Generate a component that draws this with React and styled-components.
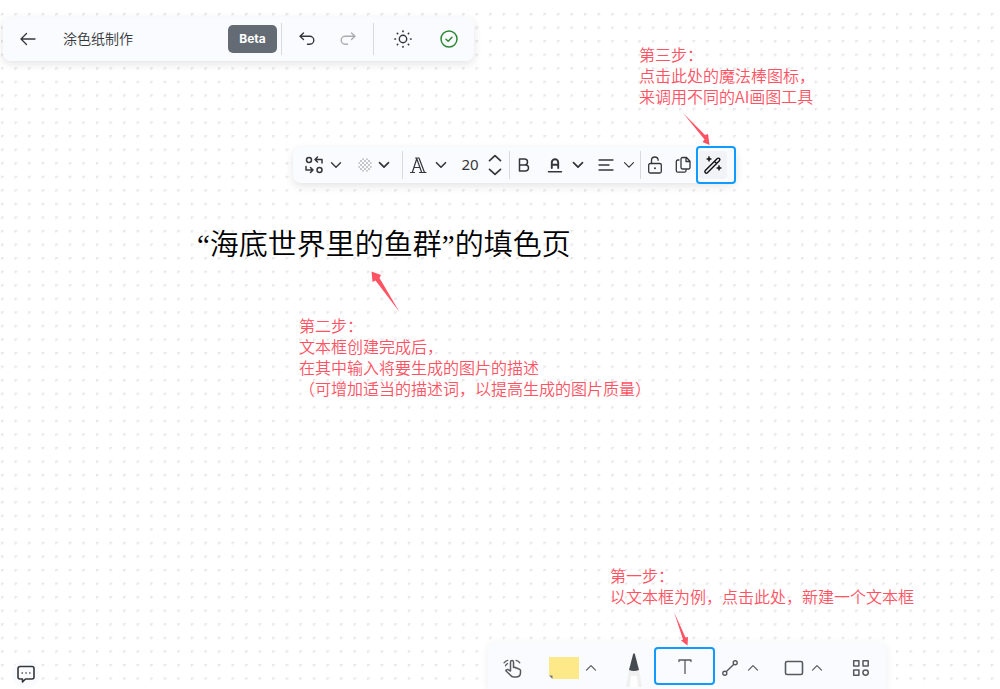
import React from "react";
import styled, { createGlobalStyle } from "styled-components";

const Global = createGlobalStyle`
  *, *::before, *::after { box-sizing: border-box; }
  body { margin: 0; background: #fff; font-family: Inter, "Noto Sans CJK SC", sans-serif; }
  button { font: inherit; color: inherit; border: 0; background: none; padding: 0; cursor: pointer; }
`;

const Stage = styled.main`
  position: relative;
  min-height: 100vh;
  overflow: hidden;
  color: #33373c;
`;

const Grid = styled.svg`
  position: absolute;
  inset: 0;
  width: 100%;
  height: 100%;
`;

const Bar = styled.div`
  position: absolute;
  display: flex;
  align-items: center;
  background: #fafbfe;
  border-radius: 8px;
  box-shadow: 0 3px 8px rgba(30, 35, 50, 0.12);
`;

const Header = styled(Bar)`
  left: 3px;
  top: 17px;
  height: 44px;
  padding-right: 8px;
`;

const FormatBar = styled(Bar)`
  left: 293px;
  top: 147px;
  height: 36px;
  padding-left: 8px;
`;

const Dock = styled(Bar)`
  left: 488px;
  bottom: 0;
  height: 47px;
  padding: 4px 5px 0 0;
  border-radius: 8px 8px 0 0;
  box-shadow: 0 2px 8px rgba(30, 35, 50, 0.08);
  color: #555a61;
`;

const Tool = styled.button`
  display: flex;
  flex: none;
  align-items: center;
  justify-content: center;
  gap: ${(p) => p.$gap || 0}px;
  width: ${(p) => p.$w}px;
  height: 34px;
  color: ${(p) => p.$color || "inherit"};
`;

const PenTool = styled(Tool)`
  padding-left: 6px;
`;

const Highlighted = styled(Tool)`
  height: 38px;
  border: 2px solid #0f9bff;
  border-radius: 4px;
  background: #fafbfe;
`;

const DockHighlighted = styled(Highlighted)`
  margin-bottom: 4px;
`;

const Active = styled.span`
  display: flex;
  align-items: center;
  justify-content: center;
  width: 28px;
  height: 28px;
  margin-right: 6px;
  border-radius: 4px;
  background: #f1f3f7;
`;

const Divider = styled.span`
  flex: none;
  width: 1px;
  height: ${(p) => p.$h}px;
  margin-left: ${(p) => p.$l || 0}px;
  background: #d8dade;
`;

const DocTitle = styled.h1`
  width: 175px;
  margin: 0;
  padding: 0 0 2px 10px;
  font: 350 14px/20px "Noto Sans CJK SC", sans-serif;
`;

const Badge = styled.span`
  width: 49px;
  border-radius: 5px;
  background: #646b75;
  color: #fff;
  font: 700 12px/28px Inter, sans-serif;
  text-align: center;
`;

const FontSize = styled.input`
  width: 24px;
  margin-left: 6px;
  padding: 0 0 2px;
  border: 0;
  background: none;
  color: inherit;
  font: 400 15px/20px "Noto Sans", sans-serif;
  text-align: center;
`;

const Stepper = styled.div`
  display: flex;
  flex-direction: column;
  gap: 2px;
  margin-left: 5px;
`;

const Step = styled.button`
  display: flex;
  align-items: center;
  justify-content: center;
  width: 16px;
  height: 12px;
`;

const CanvasText = styled.p`
  position: absolute;
  left: 197px;
  top: 227px;
  margin: 0;
  color: #000;
  font: 350 29px/36px "Liberation Serif", "Noto Sans CJK SC", sans-serif;
  white-space: nowrap;
`;

const Note = styled.p`
  position: absolute;
  left: ${(p) => p.$x}px;
  top: ${(p) => p.$y}px;
  margin: 0;
  color: #ff5263;
  font: 350 16px/21px "Noto Sans CJK SC", sans-serif;
  white-space: pre;
`;

const Arrow = styled.svg`
  position: absolute;
  left: ${(p) => p.$x}px;
  top: ${(p) => p.$y}px;
  fill: #ff5263;
`;

const Feedback = styled.button`
  position: absolute;
  left: 12px;
  bottom: 1px;
  display: flex;
  align-items: center;
  justify-content: center;
  width: 28px;
  height: 28px;
  border-radius: 50%;
  background: #fafbfe;
`;

function Icon({ w = 18, h = w, sw = 1.3, children }) {
  return (
    <svg width={w} height={h} viewBox={`0 0 ${w} ${h}`} fill="none" stroke="currentColor"
      strokeWidth={sw} strokeLinecap="round" strokeLinejoin="round" aria-hidden="true">
      {children}
    </svg>
  );
}

const Down = ({ sw = 1.4 }) => <Icon w={12} h={8} sw={sw}><path d="M1.5 1.7 6 6.2l4.5-4.5" /></Icon>;
const Up = ({ sw = 1.2 }) => <Icon w={12} h={8} sw={sw}><path d="M1.5 6.2 6 1.7l4.5 4.5" /></Icon>;

const checks = [];
for (let r = 0; r < 7; r++) for (let c = 0; c < 7; c++) if ((r + c) % 2 === 0) checks.push([c * 2, r * 2]);

export default function App() {
  return (
    <>
      <Global />
      <Stage lang="zh-CN">
        <Grid aria-hidden="true">
          <defs>
            <pattern id="dots" width="20" height="20" patternUnits="userSpaceOnUse" patternTransform="translate(1 13) scale(0.678)">
              <path d="M0 0h4v2H2v2H0z" fill="#e6e6e8" />
            </pattern>
          </defs>
          <rect y="8" width="100%" height="100%" fill="url(#dots)" />
        </Grid>

        <Header role="toolbar" aria-label="文档">
          <Tool $w={50} aria-label="返回"><Icon><path d="M16 9H2.500M7.500 3.500 2 9l5.500 5.500" /></Icon></Tool>
          <DocTitle>涂色纸制作</DocTitle>
          <Badge>Beta</Badge>
          <Divider $h={32} $l={4} />
          <Tool $w={50} aria-label="撤销"><Icon sw={1.4}><path d="M5.500 3 2 6.300l3.500 3.200M2.200 6.300h9.600a4 4 0 0 1 0 8H9.500" /></Icon></Tool>
          <Tool $w={32} $color="#a9acb1" aria-label="重做"><Icon sw={1.4}><path d="M12.500 3 16 6.300l-3.500 3.200M15.800 6.300H6.200a4 4 0 0 0 0 8h2.300" /></Icon></Tool>
          <Divider $h={32} $l={9} />
          <Tool $w={58} aria-label="主题">
            <Icon sw={1.4}>
              <circle cx="9" cy="9" r="3.700" />
              <path strokeWidth="1.700" d="M9 1v.4M9 16.600v.4M1 9h.4M16.600 9h.4M3.400 3.400l.2.2M14.400 14.400l.2.2M3.400 14.600l.2-.2M14.400 3.600l.2-.2" />
            </Icon>
          </Tool>
          <Tool $w={34} $color="#2c8a35" aria-label="已保存"><Icon sw={1.5}><circle cx="9" cy="9" r="8" /><path d="m6 9.200 2.200 2L12 7.300" /></Icon></Tool>
        </Header>

        <FormatBar role="toolbar" aria-label="格式">
          <Tool $w={44} $gap={6} aria-label="切换类型">
            <Icon w={20} sw={1.5}>
              <circle cx="5" cy="5" r="2.500" /><circle cx="15.500" cy="15" r="2.500" />
              <path d="M13.500 2 11 4.500 13.500 7M11.500 4.500H18V8M2 11.500V15h6.500M6.500 12.500 9 15l-2.500 2.500" />
            </Icon>
            <Down />
          </Tool>
          <Tool $w={57} $gap={6} aria-label="填充颜色">
            <svg width="14" height="14" viewBox="0 0 14 14" aria-hidden="true">
              <clipPath id="disc"><circle cx="7" cy="7" r="7" /></clipPath>
              <g clipPath="url(#disc)" fill="#c6c8cb">{checks.map(([x, y]) => <rect key={`${x}-${y}`} x={x} y={y} width="2" height="2" />)}</g>
            </svg>
            <Down sw={1.7} />
          </Tool>
          <Divider $h={28} />
          <Tool $w={49} $gap={8} aria-label="字体">
            <Icon w={18} sw={1.2}>
              <path d="M1.500 16.500h4M10.500 16.500h6.500M3.300 16.500 8 2M6.500 2h3.500l5.500 14.500M7.700 2.500l5 14M5.200 11.500h5.500" />
            </Icon>
            <Down sw={1.6} />
          </Tool>
          <FontSize aria-label="字号" defaultValue="20" />
          <Stepper>
            <Step aria-label="增大字号"><Icon w={14} h={8} sw={1.7}><path d="m1.500 6.700 5.500-5 5.500 5" /></Icon></Step>
            <Step aria-label="减小字号"><Icon w={14} h={8} sw={1.7}><path d="m1.500 1.300 5.500 5 5.500-5" /></Icon></Step>
          </Stepper>
          <Divider $h={28} $l={6} />
          <Tool $w={28} aria-label="加粗"><Icon w={14} h={16} sw={1.500}><path d="M2.500 2h5a3 3 0 0 1 0 6h-5zM2.500 8h6a3 3 0 0 1 0 6h-6z" /></Icon></Tool>
          <Tool $w={54} $gap={9} aria-label="文字颜色">
            <Icon w={16} h={18}><path strokeWidth="1.900" d="M4.800 12V6.500a3.200 3.200 0 0 1 6.400 0V12M4.800 8.700h6.400" /><path strokeWidth="1.500" d="M1.500 15.800h13" /></Icon>
            <Down sw={1.7} />
          </Tool>
          <Tool $w={48} $gap={8} aria-label="对齐">
            <Icon w={18} h={16}><path d="M2 3h14M2 8h10M2 13h14" /></Icon>
            <Down sw={1.200} />
          </Tool>
          <Divider $h={28} />
          <Tool $w={28} aria-label="锁定">
            <Icon w={16} h={20}><rect x="1.700" y="8.500" width="12.600" height="9.500" rx="1.500" /><path d="M4.500 8.500V5.300a3.300 3.300 0 0 1 6.600 0" /><circle cx="8" cy="13.200" r="1" fill="currentColor" stroke="none" /></Icon>
          </Tool>
          <Tool $w={27} aria-label="复制">
            <Icon w={16} h={20}><path d="M7.500 2.500h4l3.500 3.700v6.300a1.500 1.500 0 0 1-1.500 1.500h-6A1.500 1.500 0 0 1 6 12.500V4a1.500 1.500 0 0 1 1.500-1.500zM11 2.700v3.800h3.800M4 5H2.800A1.500 1.500 0 0 0 1.300 6.500v9.200a1.500 1.500 0 0 0 1.500 1.500H9.500a1.500 1.500 0 0 0 1.500-1.500v-.5" /></Icon>
          </Tool>
          <Highlighted $w={40} $color="#111" aria-label="魔法棒">
            <Active>
              <Icon w={20} sw={1.400}>
                <path d="m2.300 15.600 12-12a1.400 1.400 0 0 1 2.100 2.100l-12 12a1.400 1.400 0 0 1-2.100-2.100zM11.500 6.400l2.100 2.100" />
                <path fill="currentColor" strokeWidth=".6" d="M6 1.500l.7 1.800 1.800.7-1.800.7L6 6.500l-.7-1.800L3.500 4l1.800-.7zM16 10.500l.7 1.800 1.800.7-1.800.7-.7 1.800-.7-1.800-1.800-.7 1.800-.7z" />
              </Icon>
            </Active>
          </Highlighted>
        </FormatBar>

        <CanvasText>“海底世界里的鱼群”的填色页</CanvasText>

        <Feedback aria-label="反馈">
          <Icon w={20} sw={1.600}><path d="M4 2.500h12a2 2 0 0 1 2 2v8.500a2 2 0 0 1-2 2H9.500L6.500 18v-3H4a2 2 0 0 1-2-2V4.500a2 2 0 0 1 2-2z" /><path d="M6.200 9h.1M10 9h.1M13.800 9h.1" /></Icon>
        </Feedback>

        <Dock role="toolbar" aria-label="工具">
          <Tool $w={49} aria-label="选择">
            <Icon w={20} sw={1.500}>
              <path d="M7.500 13V4a1.500 1.500 0 0 1 3 0v5.500q1.800-.8 2.500.7 1.700-.6 2.400.9 2.100-.2 2.100 1.800v1.600c0 2.800-2 4.500-4.500 4.500h-2c-1.800 0-3-.8-4-2.200L2.800 12.800q.6-1.900 2.600-1z" />
              <path strokeWidth="1.300" d="M1 4.800q1.500-2 3.800-2.500M2.500 7.800q.6-1.500 2-2.200M13 2.300q2.500.5 3.800 2.500" />
            </Icon>
          </Tool>
          <Tool $w={71} $gap={6} aria-label="便签">
            <svg width="30" height="22" viewBox="0 0 30 22" aria-hidden="true"><path fill="#fde988" d="M0 0h30v22H4L0 18z" /><path fill="#77777c" d="M0 18.500h3.500V22z" /></svg>
            <Up />
          </Tool>
          <PenTool $w={46} aria-label="画笔">
            <svg width="18" height="38" viewBox="0 0 18 38" aria-hidden="true"><path fill="#f0f0f1" d="M4 21h10l3 17H1z" /><path fill="#fff" d="M6 27h6l1 11H5z" /><path fill="#454950" d="M8 5.500q1-2.500 2 0L14 21q-5 2-10 0z" /></svg>
          </PenTool>
          <DockHighlighted $w={61} aria-label="文本"><Icon w={14} h={16} sw={1.300}><path d="M1 3.500V2h12v1.500M7 2v13.500" /></Icon></DockHighlighted>
          <Tool $w={50} $gap={8} aria-label="连线">
            <Icon w={18} sw={1.400}><circle cx="3.800" cy="14.200" r="2" /><circle cx="14.200" cy="3.800" r="2" /><path d="m5.400 12.600 7.200-7.200" /></Icon>
            <Up />
          </Tool>
          <Tool $w={76} $gap={7} aria-label="形状">
            <Icon w={20} h={16} sw={1.600}><rect x="1.500" y="1.500" width="17" height="13" rx="1.500" /></Icon>
            <Up />
          </Tool>
          <Tool $w={40} aria-label="更多">
            <Icon w={18} sw={1.500}><rect x="1.700" y="1.700" width="5.200" height="5.200" /><rect x="11" y="1.700" width="5.200" height="5.200" /><rect x="1.700" y="11" width="5.200" height="5.200" /><circle cx="13.600" cy="13.600" r="2.700" /></Icon>
          </Tool>
        </Dock>

        <Note $x={639} $y={44}>{"第三步：\n点击此处的魔法棒图标，\n来调用不同的AI画图工具"}</Note>
        <Arrow $x={683} $y={113} width="28" height="33" aria-hidden="true"><path d="M0 0 22 22l3-1 1.500 11-7-3 2-2.500z" /></Arrow>

        <Note $x={299} $y={315}>{"第二步：\n文本框创建完成后，\n在其中输入将要生成的图片的描述\n（可增加适当的描述词，以提高生成的图片质量）"}</Note>
        <Arrow $x={371} $y={271} width="30" height="42" aria-hidden="true"><path d="M.5.5 10 4 8.500 7 28.500 41 4.500 9.500 1.500 11z" /></Arrow>

        <Note $x={610} $y={565}>{"第一步：\n以文本框为例，点击此处，新建一个文本框"}</Note>
        <Arrow $x={674} $y={612} width="16" height="34" aria-hidden="true"><path d="M0 0 11.500 25.500l2.500-.5-.5 8.500-6.500-5 2-1z" /></Arrow>
      </Stage>
    </>
  );
}
